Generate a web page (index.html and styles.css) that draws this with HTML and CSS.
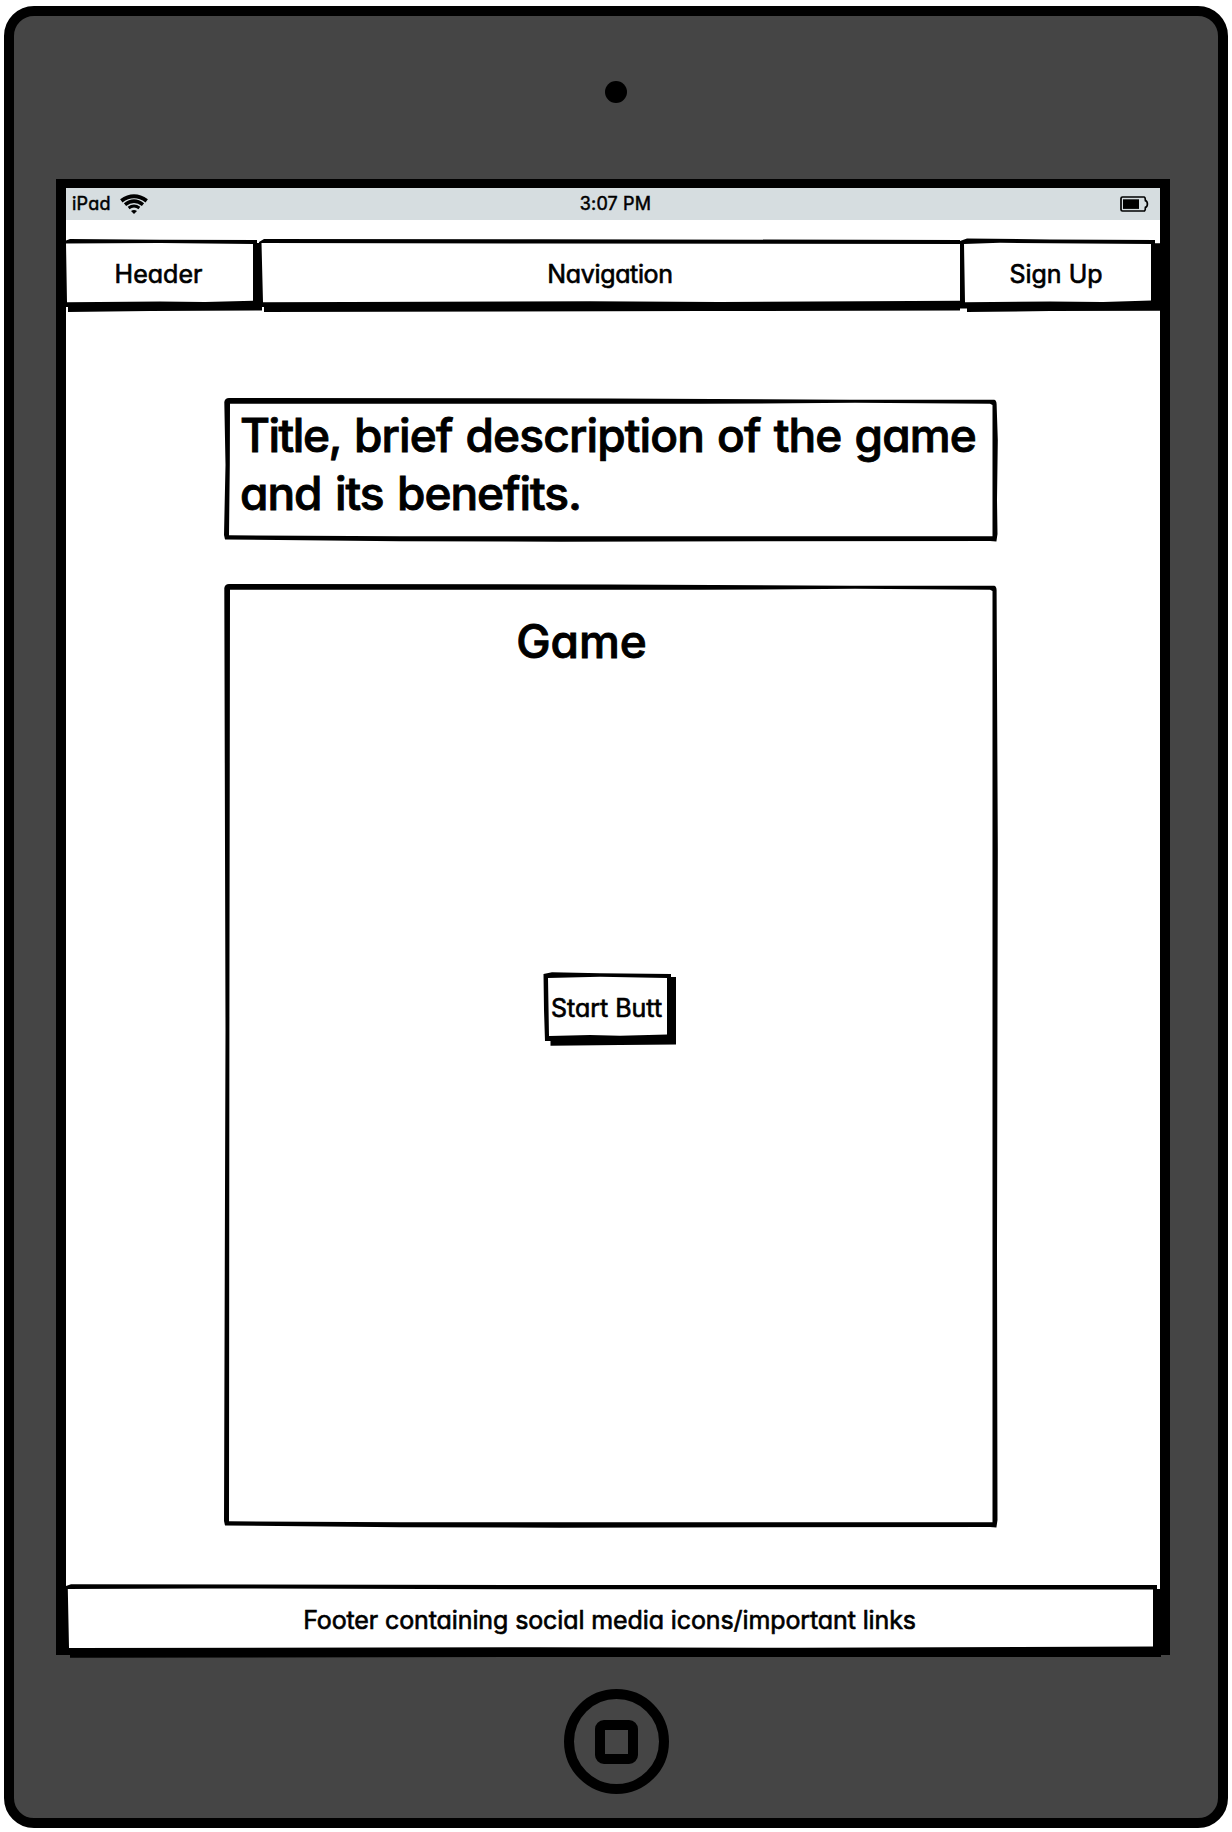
FILE: index.html
```html
<!DOCTYPE html>
<html lang="en">
<head>
<meta charset="utf-8">
<title>Game landing page wireframe</title>
<link rel="stylesheet" href="styles.css">
</head>
<body>
<div class="device">
  <div class="camera-area"><div class="camera"></div></div>
  <div class="screen">
    <div class="status">
      <div class="carrier">
        <span class="t-ipad">iPad</span>
        <svg class="wifi" width="28" height="20" viewBox="120 194 28 20">
          <g fill="none" stroke="#000">
            <path d="M121.3 200.8Q134 191.7 146.7 200.8" stroke-width="4"/>
            <path d="M125 204.6Q134 197.8 143 204.6" stroke-width="3.6"/>
            <path d="M128.6 208Q134 204 139.4 208" stroke-width="3"/>
          </g>
          <path d="M131 211Q134 209 137 211L134 213.9Z"/>
        </svg>
      </div>
      <span class="t-time">3:07 PM</span>
      <svg class="battery" width="30" height="18" viewBox="1119 195 30 18">
        <path d="M1122.5 197H1144Q1145.3 197 1145.4 200.6Q1147.4 201.2 1147.4 204Q1147.4 206.8 1145.4 207.4Q1145.3 211 1144 211H1122.5Q1121 211 1121 209.5V198.5Q1121 197 1122.5 197Z" fill="none" stroke="#000" stroke-width="1.7"/>
        <rect x="1123" y="199.3" width="16" height="9.6"/>
      </svg>
    </div>
    <nav class="topbar">
      <div class="box">
        <svg viewBox="66 238 193 74" width="193" height="74">
          <path d="M66 240.5L70 239L160 239.7L257 240V243H262V310.5L150 311L68 312V307H66Z"/>
          <path fill="#fff" d="M66 243.5L160 243L253 244V300.8L205 302L160 301.6L67 302.3Z"/>
        </svg>
        <span class="label t-header">Header</span>
      </div>
      <div class="box">
        <svg viewBox="259 238 701 74" width="701" height="74">
          <path d="M259 242L264 239L540 239.2L960 240V310.5L700 311L264 312V307H259Z"/>
          <path fill="#fff" d="M261.5 243L540 243.5L960 244V300.8L720 302L590 301.3L263 302.3Z"/>
        </svg>
        <span class="label t-nav">Navigation</span>
      </div>
      <div class="box">
        <svg viewBox="960 238 200 74" width="200" height="74">
          <path d="M960 241L967 238.5L1050 239.4L1155 240V243.3H1160V310.7L1050 311L967 312V308.5H960Z"/>
          <path fill="#fff" d="M964 244L1000 242.8L1151 244V300.6L1103 302L1050 301.4L965 302.3Z"/>
        </svg>
        <span class="label t-sign">Sign Up</span>
      </div>
    </nav>
    <main class="content">
      <div class="box title-box">
        <svg viewBox="224 398 774 144" width="774" height="144">
          <path fill-rule="evenodd" d="M224.3 402Q225 398.2 229 398L610 398.5L850 399.8L994 399.8Q996.4 400 996.6 404L997.8 440L997 500L997.5 534L996.4 541.5L990 541L760 541.2L560 541.8L400 541.2L225 539.4L224 535L225.5 465ZM230 403.8L229.8 465L229 535.3L400 536.2H992.5V405L990 403.8L855 402.8L700 403.8Z"/>
        </svg>
        <h1 class="title"><span class="t-l1"><span class="t-word">Title,</span> brief description of the game</span><br><span class="t-l2">and its benefits.</span></h1>
      </div>
      <div class="box game-box">
        <svg viewBox="224 584 774 944" width="774" height="944">
          <path fill-rule="evenodd" d="M224.3 588Q225 584.2 229 584L610 584.5L850 585.8L994 585.8Q996.4 586 996.6 590L997.8 850L997 1250L997.5 1520L996.4 1527.5L990 1527L760 1527.2L560 1527.8L400 1527.2L225 1525.4L224 1521L225.5 1030ZM230 589.8L229.4 1030L229 1521.3L400 1522.2H992.5V591L990 589.8L855 588.8L700 589.8Z"/>
        </svg>
        <div class="game">
          <h2 class="t-game">Game</h2>
          <div class="box start">
            <svg viewBox="543 972 133 74" width="133" height="74">
              <path d="M543.5 974L552 972.3L600 973.3L671 974V977H676V1044.6L620 1045L550.5 1045.8V1041H545L544 1010Z"/>
              <path fill="#fff" d="M548 978L600 976.8L667 978V1034.5L620 1035.8L590 1035L549 1036Z"/>
            </svg>
            <span class="label t-start">Start Butt</span>
          </div>
        </div>
      </div>
    </main>
    <footer class="box footer">
      <svg viewBox="66 1583 1094 75" width="1094" height="75">
        <path d="M66 1586L71 1584.2L540 1585L1157 1585V1589H1161V1657L540 1657L70 1657.8V1655H66Z"/>
        <path fill="#fff" d="M67.8 1589L200 1588.4L540 1589.3L1153 1589.5V1646.6L800 1647.8L540 1647.2L69 1648Z"/>
      </svg>
      <span class="label t-footer">Footer containing social media icons/important links</span>
    </footer>
  </div>
  <div class="home-area"><div class="home"><div class="home-mark"></div></div></div>
</div>
</body>
</html>
```
FILE: styles.css
```css
* { box-sizing: border-box; }
body {
  margin: 0;
  padding: 6px 4px;
  background: #fff;
  color: #000;
  font-family: Inter, "Noto Sans", sans-serif;
  font-feature-settings: "cv11" 1;
}
.device {
  display: flex;
  flex-direction: column;
  width: 1224px;
  height: 1822px;
  border: 10px solid #000;
  border-radius: 30px;
  background: #454545;
}
.camera-area { display: flex; justify-content: center; height: 163px; padding-top: 65px; }
.camera { width: 22px; height: 22px; border-radius: 50%; background: #000; }
.screen {
  display: flex;
  flex-direction: column;
  width: 1114px;
  height: 1476px;
  margin-left: 42px;
  border: solid #000;
  border-width: 9px 10px 0;
  background: #fff;
}
.status {
  display: grid;
  grid-template-columns: 1fr auto 1fr;
  align-items: center;
  height: 32px;
  padding: 0 11px 0 6px;
  background: #d6dde0;
  font-size: 18px;
  line-height: 32px;
  -webkit-text-stroke: 0.5px #000;
}
.carrier { display: flex; align-items: center; gap: 9px; }
.t-ipad { letter-spacing: 0.25px; }
.t-time { margin-left: 10px; letter-spacing: 0.15px; }
.battery { justify-self: end; }
.topbar { display: grid; grid-template-columns: 193px 701px 200px; margin-top: 18px; height: 74px; }
.box { display: grid; }
.box > * { grid-area: 1 / 1; }
.box > svg { display: block; overflow: visible; }
.label {
  justify-self: center;
  align-self: center;
  margin-bottom: 2px;
  white-space: nowrap;
  font-size: 25px;
  line-height: 30px;
  -webkit-text-stroke: 0.65px #000;
}
.t-header, .t-sign { margin-right: 8px; }
.t-nav { margin-left: 1px; letter-spacing: -0.35px; }
.t-start { margin-right: 5px; }
.t-footer { margin-right: 7px; letter-spacing: -0.11px; }
.content { display: flex; flex-direction: column; gap: 42px; margin: 86px 0 0 158px; }
.title-box, .game-box { width: 774px; }
.title, .game h2 {
  margin: 0;
  font-size: 46px;
  font-weight: 500;
  line-height: 58px;
  white-space: nowrap;
  -webkit-text-stroke: 0.9px #000;
}
.title { padding: 8px 0 0 16px; }
.t-l1 { letter-spacing: -0.85px; word-spacing: 1.6px; }
.t-word { letter-spacing: -1.5px; }
.t-l2 { letter-spacing: -1.05px; word-spacing: 2.4px; }
.game { display: flex; flex-direction: column; align-items: center; padding-top: 28px; }
.game .t-game { margin-right: 59px; }
.start { width: 133px; height: 74px; margin: 302px 4px 0 0; }
.footer { height: 75px; margin-top: 55px; }
.home-area { display: flex; justify-content: center; padding-top: 34px; }
.home {
  display: flex;
  align-items: center;
  justify-content: center;
  width: 105px;
  height: 105px;
  border: 10px solid #000;
  border-radius: 50%;
}
.home-mark { width: 43px; height: 44px; border: 10px solid #000; border-radius: 9px; }
```
